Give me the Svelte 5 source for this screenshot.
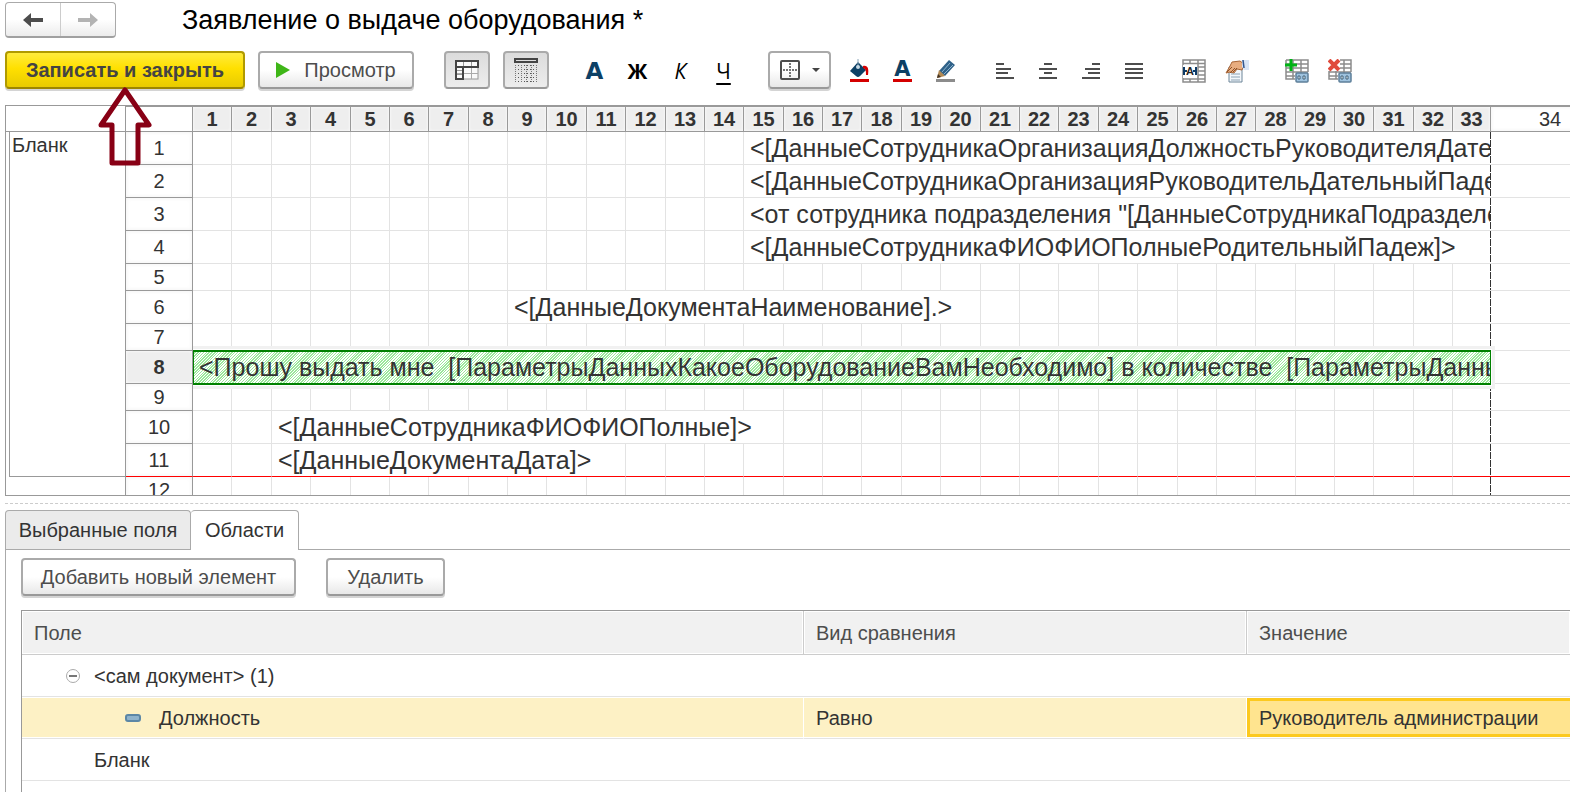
<script>
    const AREA_WIDTH = 120;
    const HEAD_WIDTH = 67;
    const LAST_WIDTH = 120;
    const PAGE_COLS = 33;
    const COL_STEP = 39.38;

    // whole-pixel widths that add up to the same step across the page
    const columns = Array.from({ length: PAGE_COLS }, (_, i) => ({
        n: i + 1,
        width:
            i === PAGE_COLS - 1
                ? 37
                : Math.round((i + 1) * COL_STEP) - Math.round(i * COL_STEP),
    }));

    const sheetWidth =
        AREA_WIDTH + HEAD_WIDTH + LAST_WIDTH + columns.reduce((sum, c) => sum + c.width, 0);

    const rows = [
        { n: 1, from: 15, span: 19, text: '<[ДанныеСотрудникаОрганизацияДолжностьРуководителяДательныйПадеж]>' },
        { n: 2, from: 15, span: 19, text: '<[ДанныеСотрудникаОрганизацияРуководительДательныйПадеж]>' },
        { n: 3, from: 15, span: 19, text: '<от сотрудника подразделения "[ДанныеСотрудникаПодразделение]">' },
        { n: 4, from: 15, span: 19, text: '<[ДанныеСотрудникаФИОФИОПолныеРодительныйПадеж]>' },
        { n: 5, low: true },
        { n: 6, from: 9, span: 12, text: '<[ДанныеДокументаНаименование].>' },
        { n: 7, low: true },
        { n: 8, from: 1, span: 33, selected: true, text: '<Прошу выдать мне  [ПараметрыДанныхКакоеОборудованиеВамНеобходимо] в количестве  [ПараметрыДанныхКоличество]>' },
        { n: 9, low: true },
        { n: 10, from: 3, span: 13, text: '<[ДанныеСотрудникаФИОФИОПолные]>' },
        { n: 11, from: 3, span: 9, areaEnd: true, text: '<[ДанныеДокументаДата]>' },
        { n: 12, low: true, outside: true },
    ];

    function cells(row) {
        const list = [];
        for (let n = 1; n <= PAGE_COLS; n++) {
            if (row.text && n === row.from) {
                list.push({ span: row.span, text: row.text, end: n + row.span > PAGE_COLS });
                n += row.span - 1;
            } else {
                list.push({ span: 1, text: '', end: n === PAGE_COLS });
            }
        }
        return list;
    }

    const aligns = [
        { label: 'По левому краю', d: 'M0 1h8M0 6h15M0 10h12M0 15h18' },
        { label: 'По центру', d: 'M5 1h8M0 6h18M5 10h8M0 15h18' },
        { label: 'По правому краю', d: 'M10 1h8M3 6h15M6 10h12M0 15h18' },
        { label: 'По ширине', d: 'M0 1h18M0 6h18M0 10h18M0 15h18' },
    ];
</script>

<header class="title-bar">
    <div class="nav">
        <button type="button" aria-label="Назад">
            <svg width="22" height="16" viewBox="0 0 22 16">
                <path d="M9 1 1 8l8 7v-5h12V6H9z" fill="#4d4d4d" />
            </svg>
        </button>
        <button type="button" aria-label="Вперед">
            <svg width="22" height="16" viewBox="0 0 22 16">
                <path d="M13 1l8 7-8 7v-5H1V6h12z" fill="#b3b3b3" />
            </svg>
        </button>
    </div>
    <h1>Заявление о выдаче оборудования *</h1>
</header>

<div class="toolbar" role="toolbar" aria-label="Форматирование">
    <button type="button" class="btn primary">Записать и закрыть</button>
    <button type="button" class="btn preview">
        <svg width="14" height="16" viewBox="0 0 14 16">
            <path d="M0 0l14 8-14 8z" fill="#3fb618" />
        </svg>
        Просмотр
    </button>

    <button type="button" class="btn toggle" aria-pressed="true" aria-label="Заголовки">
        <svg width="24" height="20" viewBox="0 0 24 20" fill="none">
            <rect x="1" y="1" width="22" height="18" fill="#fafafa" stroke="#999" />
            <path d="M1 13.500h22M16.500 7v12" stroke="#aaa" />
            <path d="M8.500 1v6M16.500 1v6M1 10.500h7M1 14.500h7" stroke="#999" />
            <path d="M1 1h22v6H1zM1 7h7v12H1z" stroke="#444" stroke-width="2" />
        </svg>
    </button>
    <button type="button" class="btn toggle" aria-pressed="true" aria-label="Сетка">
        <svg width="24" height="24" viewBox="0 0 24 24" fill="none">
            <rect x="1" y="1" width="22" height="3" fill="#ddd" stroke="#444" stroke-width="2" />
            <path
                d="M1 7.500h22M1 11.500h22M1 15.500h22M1 19.500h22M1 23.500h22"
                stroke="#555"
                stroke-dasharray="1 2"
            />
            <path
                d="M1.500 7v17M7.500 7v17M12.500 7v17M17.500 7v17M22.500 7v17"
                stroke="#777"
                stroke-dasharray="1 1"
            />
        </svg>
    </button>

    <div class="group letters">
        <button type="button" class="icon navy" aria-label="Шрифт">A</button>
        <button type="button" class="icon bold" aria-label="Полужирный">Ж</button>
        <button type="button" class="icon italic" aria-label="Курсив">К</button>
        <button type="button" class="icon underline" aria-label="Подчеркнутый">Ч</button>
    </div>

    <button type="button" class="btn borders" aria-label="Границы">
        <svg width="20" height="20" viewBox="0 0 20 20" fill="none">
            <rect x="1" y="1" width="18" height="18" rx="1" stroke="#4d4d4d" stroke-width="2" />
            <path d="M10 3v15M3 10h15" stroke="#777" stroke-width="2" stroke-dasharray="2 1" />
        </svg>
        <svg width="8" height="4" viewBox="0 0 8 4">
            <path d="M0 0h8L4 4z" fill="#444" />
        </svg>
    </button>

    <div class="group colors">
        <button type="button" class="icon" aria-label="Цвет фона">
            <svg width="20" height="24" viewBox="0 0 20 24">
                <path d="M8 3l8 8-6 6q-2 2-4 0L0 12z" fill="#0d4065" />
                <path d="M13 7c5-1 6 3 5 9h-2c0-4 0-6-3-7z" fill="#d40000" />
                <path d="M8 0v7" stroke="#8aa5b8" />
                <circle cx="8" cy="8" r="2" fill="#c8dae6" />
                <path d="M0 20h19v3H0z" fill="#d40000" />
            </svg>
        </button>
        <button type="button" class="icon" aria-label="Цвет текста">
            <span class="color-letter">A</span>
        </button>
        <button type="button" class="icon" aria-label="Цвет рамки">
            <svg width="20" height="24" viewBox="0 0 20 24">
                <path d="M13 1l6 5L9 17l-6-5z" fill="#2f6188" />
                <path d="M14 4L6 13M17 6L8 15" stroke="#8fb4cf" />
                <path d="M3 11l6 6-8 2z" fill="#b28a55" />
                <path d="M1 19l1-4 3 3z" fill="#443322" />
                <path d="M0 20h19v3H0z" fill="#8c8c8c" />
            </svg>
        </button>
    </div>

    <div class="group">
        {#each aligns as align}
            <button type="button" class="icon" aria-label={align.label}>
                <svg width="18" height="16" viewBox="0 0 18 16">
                    <path d={align.d} stroke="#4d4d4d" stroke-width="2" />
                </svg>
            </button>
        {/each}
    </div>

    <div class="group">
        <button type="button" class="icon" aria-label="Объединить">
            <svg width="24" height="24" viewBox="0 0 24 24" fill="none">
                <path
                    d="M1 1h22v22H1zM1 4.500h22M1 20h22M16 1v22M16 8h7M16 12h7M16 16h7M8 1v3M8 20v3"
                    stroke="#8c8c8c"
                    stroke-width="1.5"
                />
                <path d="M1 6h14v13H1z" fill="#fff" />
                <path d="M2 8v8M14 8v8M2 12h3M11 12h3" stroke="#0d3a66" stroke-width="2" />
                <text x="8" y="16" text-anchor="middle" class="glyph">A</text>
            </svg>
        </button>
        <button type="button" class="icon" aria-label="Свойства">
            <svg width="24" height="24" viewBox="0 0 24 24">
                <path d="M4 8h13v15H4z" fill="#f3f7fb" stroke="#6d8598" />
                <path d="M6 15h9M6 18h9M6 21h9" stroke="#8ca3b5" />
                <path d="M7 3l8-1 4 3-2 6-5-1-3 4-4-1-4 1 4-7z" fill="#e8ad80" stroke="#a86536" />
                <path d="M2 13l5-5M5 14l5-5M8 13l4-4" stroke="#8f5228" />
                <path d="M17 1h7v10h-5l-2-3z" fill="#d9e5f5" />
                <path d="M18 1l1 8" stroke="#33558c" stroke-width="1.5" />
            </svg>
        </button>
    </div>

    <div class="group">
        {#each ['Добавить область', 'Удалить область'] as label, i}
            <button type="button" class="icon" aria-label={label}>
                <svg width="24" height="24" viewBox="0 0 24 24" fill="none">
                    <path
                        d="M1 1h22v12M1 1v19h9M1 5h22M1 9h22M1 13h22M1 17h9M8 1v19M16 1v13"
                        stroke="#8c8c8c"
                        stroke-width="1.5"
                    />
                    <rect x="11" y="14" width="12" height="9" rx="1" fill="#9fc3df" stroke="#5d7f99" stroke-width="1.5" />
                    <path d="M13 17h2v3h-2zM18 17h2v3h-2z" fill="#fff" stroke="#3f6078" />
                    {#if i === 0}
                        <path d="M0 6h12M6 0v12" stroke="#00b315" stroke-width="3" />
                    {:else}
                        <path d="M0 0h12v12H0z" fill="#fff" />
                        <path d="M1 1l10 10M11 1L1 11" stroke="#e04b3c" stroke-width="4" />
                    {/if}
                </svg>
            </button>
        {/each}
    </div>

    <svg class="pointer" width="56" height="80" viewBox="0 0 56 80" fill="none" aria-hidden="true">
        <path d="M28 3L52 38H41V76H15V38H4z" stroke="#880015" stroke-width="5" stroke-linejoin="round" />
    </svg>
</div>

<div class="sheet">
    <table style="width: {sheetWidth}px">
        <colgroup>
            <col style="width: {AREA_WIDTH}px" />
            <col style="width: {HEAD_WIDTH}px" />
            {#each columns as column}
                <col style="width: {column.width}px" />
            {/each}
            <col style="width: {LAST_WIDTH}px" />
        </colgroup>
        <thead>
            <tr>
                <td class="corner"></td>
                <td class="corner numbers"></td>
                {#each columns as column}
                    <th scope="col" class="picked">{column.n}</th>
                {/each}
                <th scope="col" class="beyond">{PAGE_COLS + 1}</th>
            </tr>
        </thead>
        <tbody>
            {#each rows as row}
                <tr class:low={row.low} class:area-end={row.areaEnd}>
                    {#if row.n === 1}
                        <td class="area" rowspan="11"><div>Бланк</div></td>
                    {:else if row.outside}
                        <td class="area-rest"></td>
                    {/if}
                    <th scope="row" class:picked={row.selected}>{row.n}</th>
                    {#each cells(row) as cell}
                        <td
                            colspan={cell.span}
                            class:selected={row.selected}
                            class:end={cell.end}>{cell.text}</td
                        >
                    {/each}
                    <td class="beyond"></td>
                </tr>
            {/each}
        </tbody>
    </table>
</div>

<div class="splitter"></div>

<section class="lower">
    <div class="tabs" role="tablist">
        <button type="button" role="tab" aria-selected="false">Выбранные поля</button>
        <button type="button" role="tab" aria-selected="true">Области</button>
    </div>

    <div class="panel" role="tabpanel">
        <div class="commands">
            <button type="button" class="btn add">Добавить новый элемент</button>
            <button type="button" class="btn remove">Удалить</button>
        </div>

        <table class="conditions">
            <thead>
                <tr>
                    <th class="field">Поле</th>
                    <th class="compare">Вид сравнения</th>
                    <th>Значение</th>
                </tr>
            </thead>
            <tbody>
                <tr>
                    <td colspan="3">
                        <div class="node">
                            <svg width="14" height="14" viewBox="0 0 14 14" fill="none">
                                <circle cx="7" cy="7" r="6.5" stroke="#aaa" />
                                <path d="M3 7h8" stroke="#777" stroke-width="2" />
                            </svg>
                            &lt;сам документ&gt; (1)
                        </div>
                    </td>
                </tr>
                <tr class="current">
                    <td>
                        <div class="node leaf">
                            <svg width="16" height="8" viewBox="0 0 16 8">
                                <rect x="1" y="1" width="14" height="6" rx="2" fill="#8fb3cc" stroke="#5c87a6" stroke-width="2" />
                            </svg>
                            Должность
                        </div>
                    </td>
                    <td>Равно</td>
                    <td class="active">Руководитель администрации</td>
                </tr>
                <tr>
                    <td colspan="3"><div class="node plain">Бланк</div></td>
                </tr>
                <tr><td colspan="3"></td></tr>
            </tbody>
        </table>
    </div>
</section>

<style>
    :global(body) {
        margin: 0;
        overflow: hidden;
        background: #fff;
        color: #333;
        font-family: 'Liberation Sans', Arial, sans-serif;
        font-size: 20px;
    }

    button {
        font: inherit;
        color: #4d4d4d;
        padding: 0;
        border: 0;
        background: none;
    }

    svg {
        flex: none;
    }

    .title-bar {
        display: flex;
        align-items: center;
        gap: 66px;
        height: 36px;
        padding: 2px 5px 0;
    }

    .title-bar h1 {
        margin: 0;
        font-size: 27px;
        font-weight: 400;
        color: #000;
        white-space: nowrap;
    }

    .nav {
        display: flex;
        box-sizing: border-box;
        width: 111px;
        height: 36px;
        border: 1px solid #aaa;
        border-bottom: 2px solid #a0a0a0;
        border-radius: 4px;
        background: linear-gradient(#fff 50%, #ececec);
    }

    .nav button {
        flex: 1;
        display: grid;
        place-items: center;
    }

    .nav button + button {
        border-left: 1px solid #ccc;
    }

    .toolbar {
        position: relative;
        display: flex;
        align-items: center;
        height: 38px;
        padding: 13px 5px 16px;
    }

    .btn {
        display: flex;
        align-items: center;
        justify-content: center;
        box-sizing: border-box;
        height: 38px;
        padding: 0;
        border: 2px solid #aaa;
        border-bottom-color: #999;
        border-radius: 4px;
        background: linear-gradient(#fff 50%, #e8e8e8);
        box-shadow: 0 2px 0 #d4d4d4;
        white-space: nowrap;
    }

    .primary {
        width: 240px;
        border-color: #b09a00;
        border-bottom-color: #9c8600;
        background: linear-gradient(#ffeb3d, #ffe000 45%, #e8cb00);
        color: #444;
        font-weight: 700;
    }

    .preview {
        width: 156px;
        margin-left: 13px;
        gap: 14px;
    }

    .toggle {
        width: 46px;
        margin-left: 13px;
        background: linear-gradient(#dcdcdc, #ededed);
        box-shadow: none;
    }

    .preview + .toggle {
        margin-left: 30px;
    }

    .group {
        display: flex;
        margin-left: 17px;
    }

    .letters {
        margin: 0 23px 0 24px;
    }

    .colors {
        margin-left: 7px;
    }

    .colors + .group {
        margin-left: 16px;
    }

    .icon {
        display: grid;
        place-items: center;
        width: 43px;
        height: 38px;
        padding-top: 2px;
        color: #000;
        font-family: 'Open Sans', 'Noto Sans', sans-serif;
        font-size: 21px;
        line-height: 36px;
    }

    .navy,
    .color-letter {
        color: #0d4065;
        font-family: 'DejaVu Sans', sans-serif;
        font-size: 23px;
        font-weight: 700;
    }

    .bold {
        font-weight: 700;
    }

    .italic {
        font-style: italic;
    }

    .underline {
        text-decoration: underline;
        text-underline-offset: 4px;
    }

    .color-letter {
        width: 19px;
        font-size: 21px;
        line-height: 19px;
        border-bottom: 3px solid #d40000;
    }

    .glyph {
        fill: #222;
        font: 700 11px 'Liberation Sans', sans-serif;
    }

    .borders {
        width: 63px;
        gap: 12px;
    }

    .pointer {
        position: absolute;
        left: 97px;
        top: 49px;
        z-index: 5;
        pointer-events: none;
    }

    .sheet {
        box-sizing: border-box;
        height: 391px;
        margin-left: 5px;
        overflow: hidden;
        border: solid #999;
        border-width: 1px 0 1px 1px;
    }

    .sheet table {
        table-layout: fixed;
        border-spacing: 0;
    }

    .sheet th,
    .sheet td {
        box-sizing: border-box;
        padding: 0;
        border: solid #e3e3e3;
        border-width: 0 1px 1px 0;
    }

    .sheet th {
        position: relative;
        z-index: 1;
        border-color: #999;
        background: #fff;
        box-shadow: inset 0 0 4px #f0f0f0;
        font-size: 20px;
        font-weight: 400;
        line-height: 22px;
    }

    .sheet thead tr {
        height: 26px;
    }

    .sheet thead th,
    .sheet thead .numbers {
        border-top: 1px solid #999;
    }

    .sheet thead th.picked:nth-last-child(2) {
        border-right: 0;
    }

    .sheet thead th.beyond {
        border-left: 1px solid #999;
    }

    .sheet th.picked {
        background: #eee;
        box-shadow: inset 0 0 3px #fff;
        font-weight: 700;
    }

    .sheet .corner {
        border-color: #999;
    }

    .sheet tbody tr {
        height: 33px;
    }

    .sheet tbody tr.low {
        height: 27px;
    }

    .sheet tbody td {
        overflow: hidden;
        padding-left: 6px;
        font-size: 25px;
        line-height: 26px;
        white-space: pre;
    }

    .sheet tbody td.end {
        border-right: 0;
    }

    .sheet tbody td.beyond {
        background: repeating-linear-gradient(#333 0 7px, #fff 7px 8px) left / 1px 100% no-repeat;
    }

    .sheet tbody td.area {
        padding: 0 0 0 3px;
        border-color: #999;
        border-bottom: 0;
        vertical-align: top;
        font-size: 20px;
    }

    .area div {
        box-sizing: border-box;
        height: 345px;
        padding-left: 2px;
        border: solid #999;
        border-width: 0 0 1px 1px;
    }

    .sheet tbody td.area-rest {
        border-color: #999;
    }

    .sheet .area-end th,
    .sheet .area-end td {
        border-bottom-color: #f00;
    }

    .sheet tbody td.selected {
        position: relative;
        border-bottom-color: #008000;
        background: repeating-linear-gradient(135deg, #9be89b 0 1px, #fff 1px 2px);
        box-shadow:
            inset 0 1px #008000,
            inset 1px 0 #008000,
            0 0 0 1px #008000,
            0 0 0 2px #fff,
            0 0 0 5px #f1f1f1;
    }

    .splitter {
        height: 7px;
        margin-left: 5px;
        border-bottom: 1px dashed #ccc;
    }

    .lower {
        margin: 6px 0 0 5px;
    }

    .tabs {
        display: flex;
        height: 39px;
        border-bottom: 1px solid #aaa;
    }

    .tabs button {
        box-sizing: border-box;
        width: 186px;
        height: 39px;
        border: 1px solid #aaa;
        border-bottom: 0;
        border-radius: 4px 4px 0 0;
        background: #ebebeb;
        color: #333;
    }

    .tabs button[aria-selected='true'] {
        width: 108px;
        height: 40px;
        padding-bottom: 1px;
        border-left: 0;
        background: #fff;
    }

    .panel {
        padding: 8px 0 0 15px;
        border-left: 1px solid #aaa;
    }

    .commands {
        display: flex;
        gap: 30px;
        margin-bottom: 14px;
    }

    .add {
        width: 275px;
    }

    .remove {
        width: 119px;
    }

    .conditions {
        width: 100%;
        table-layout: fixed;
        border-spacing: 0;
        border: solid #999;
        border-width: 1px 0 0 1px;
    }

    .conditions th,
    .conditions td {
        box-sizing: border-box;
        height: 42px;
        padding: 1px 12px 0;
        border-bottom: 1px solid #e3e3e3;
        text-align: left;
        white-space: nowrap;
    }

    .conditions th {
        height: 44px;
        border-right: 1px solid #ccc;
        border-bottom-color: #ccc;
        background: #f1f1f1;
        box-shadow: inset 0 0 0 1px #fff;
        color: #4d4d4d;
        font-weight: 400;
    }

    .conditions th:last-child {
        border-right: 0;
    }

    .conditions .field {
        width: 782px;
    }

    .conditions .compare {
        width: 443px;
    }

    .node {
        display: flex;
        align-items: center;
        gap: 14px;
        padding-left: 32px;
    }

    .leaf {
        gap: 18px;
        padding-left: 91px;
    }

    .plain {
        padding-left: 60px;
    }

    .conditions .current td {
        border-right: 1px solid #fff;
        background: #fdf1c5;
        box-shadow: inset 0 1px #fff, inset 0 -1px #fff;
    }

    .conditions .current td.active {
        border-right: 0;
        background: #ffe48f;
        box-shadow:
            inset 0 1px #fff,
            inset 0 -1px #fff,
            inset 3px 0 #fcc91f,
            inset 0 4px #fcc91f,
            inset 0 -4px #fcc91f;
    }
</style>
